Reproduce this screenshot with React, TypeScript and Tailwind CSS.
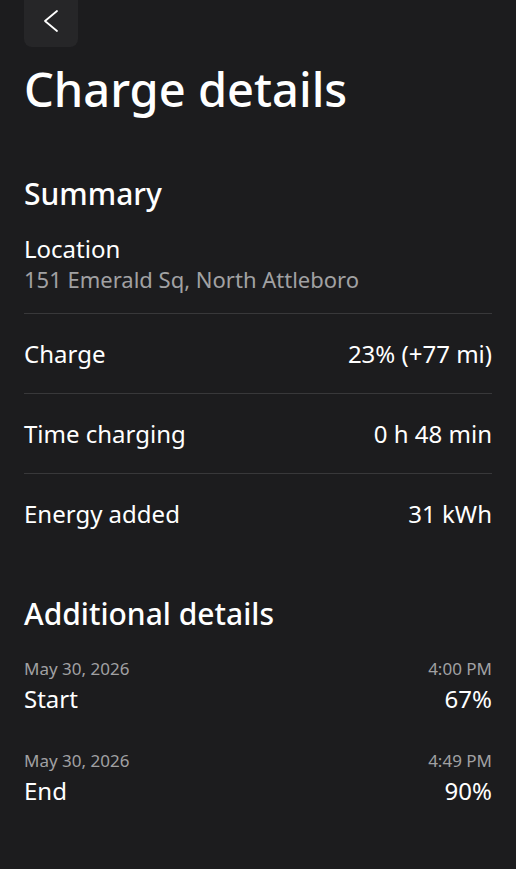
const summary = [
  { label: "Charge", value: "23% (+77 mi)" },
  { label: "Time charging", value: "0 h 48 min" },
  { label: "Energy added", value: "31 kWh" },
];

const events = [
  { date: "May 30, 2026", time: "4:00 PM", label: "Start", value: "67%" },
  { date: "May 30, 2026", time: "4:49 PM", label: "End", value: "90%" },
];

export default function App() {
  return (
    <div className="min-h-[869px] overflow-hidden bg-[#1c1c1e] px-6 text-white [font-family:'Noto_Sans',sans-serif]">
      {/* Back button, scrolled partly off the top */}
      <button className="flex h-[47px] w-[54px] items-center justify-center rounded-b-lg bg-[#262628]">
        <svg width="18" height="24" viewBox="0 0 18 24" fill="none" className="-mt-[5px]">
          <path d="M15 2 L3 12 L15 22" stroke="white" strokeWidth="1.8" strokeLinecap="round" strokeLinejoin="round" />
        </svg>
      </button>

      <h1 className="mt-[14px] text-[47px] leading-[56px] font-medium">Charge details</h1>

      {/* Summary */}
      <h2 className="mt-[59px] text-[30px] leading-[36px] font-medium">Summary</h2>
      <div className="mt-[22px] pb-[19px]">
        <div className="text-[24px] leading-[30px]">Location</div>
        <div className="text-[22px] leading-[30px] text-[#a1a1a3]">151 Emerald Sq, North Attleboro</div>
      </div>
      {summary.map((row) => (
        <div
          key={row.label}
          className="flex h-[80px] items-center justify-between border-t border-[#38383a] text-[24px]"
        >
          <span>{row.label}</span>
          <span>{row.value}</span>
        </div>
      ))}

      {/* Additional details */}
      <h2 className="mt-[43px] text-[30px] leading-[36px] font-medium">Additional details</h2>
      <div className="mt-[26px] flex flex-col gap-[36px]">
        {events.map((e) => (
          <div key={e.label} className="flex flex-col gap-1">
            <div className="flex justify-between text-[17px] leading-[22px] text-[#a1a1a3]">
              <span>{e.date}</span>
              <span>{e.time}</span>
            </div>
            <div className="flex justify-between text-[24px] leading-[30px]">
              <span>{e.label}</span>
              <span>{e.value}</span>
            </div>
          </div>
        ))}
      </div>
    </div>
  );
}
